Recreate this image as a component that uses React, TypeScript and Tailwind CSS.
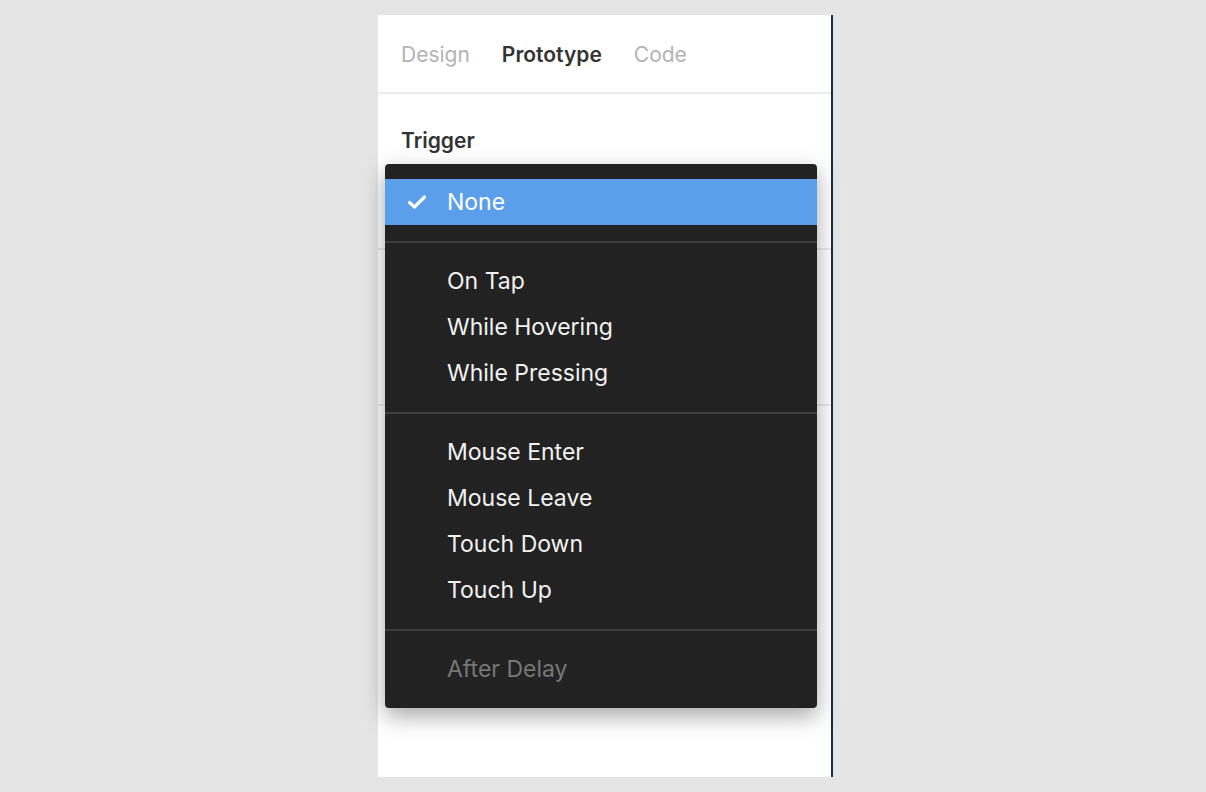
import React from "react";

const groups: { label: string; muted?: boolean }[][] = [
  [{ label: "On Tap" }, { label: "While Hovering" }, { label: "While Pressing" }],
  [{ label: "Mouse Enter" }, { label: "Mouse Leave" }, { label: "Touch Down" }, { label: "Touch Up" }],
  [{ label: "After Delay", muted: true }],
];

const Check = () => (
  <svg width="20" height="16" viewBox="0 0 20 16" fill="none">
    <path d="M2.5 8.5 L7.5 13 L17.5 3" stroke="white" strokeWidth="3.2" strokeLinecap="round" strokeLinejoin="round" />
  </svg>
);

const App = () => {
  return (
    <div
      className="min-h-screen bg-[#e5e5e5] flex justify-center pt-[15px]"
      style={{ fontFamily: "Inter, 'Noto Sans', sans-serif" }}
    >
      <div className="relative ml-[5px] w-[455px] h-[762px] bg-white border-r-2 border-[#1e2a3e]">
        <div className="h-[79px] flex items-center gap-8 px-[23px] pt-[2px] border-b-2 border-[#ececec] text-[21px]">
          <span className="text-[#b3b3b3]">Design</span>
          <span className="text-[#333] font-semibold">Prototype</span>
          <span className="text-[#b3b3b3]">Code</span>
        </div>
        <div className="h-[156px] border-b-2 border-[#ececec] px-[23px] pt-[31px]">
          <div className="text-[21px] font-semibold text-[#333]">Trigger</div>
        </div>
        <div className="h-[156px] border-b-2 border-[#ececec]"></div>

        <div className="absolute left-[7px] top-[149px] w-[432px] h-[544px] bg-[#222] rounded-[4px] shadow-[0_8px_22px_rgba(0,0,0,0.35)] text-[23px] text-white">
          <div className="pt-[15px] pb-4 border-b-2 border-[#3f3f3f]">
            <div className="h-[46px] bg-[#5b9fea] flex items-center">
              <span className="w-[62px] flex justify-center pl-[2px]">
                <Check />
              </span>
              <span>None</span>
            </div>
          </div>
          {groups.map((g, i) => (
            <div
              key={i}
              className={`pt-[15px] pb-4 ${i < groups.length - 1 ? "border-b-2 border-[#3f3f3f]" : ""}`}
            >
              {g.map((item) => (
                <div
                  key={item.label}
                  className={`h-[46px] flex items-center pl-[62px] ${item.muted ? "text-[#777]" : "text-[#f2f2f2]"}`}
                >
                  {item.label}
                </div>
              ))}
            </div>
          ))}
        </div>
      </div>
    </div>
  );
};

export default App;
